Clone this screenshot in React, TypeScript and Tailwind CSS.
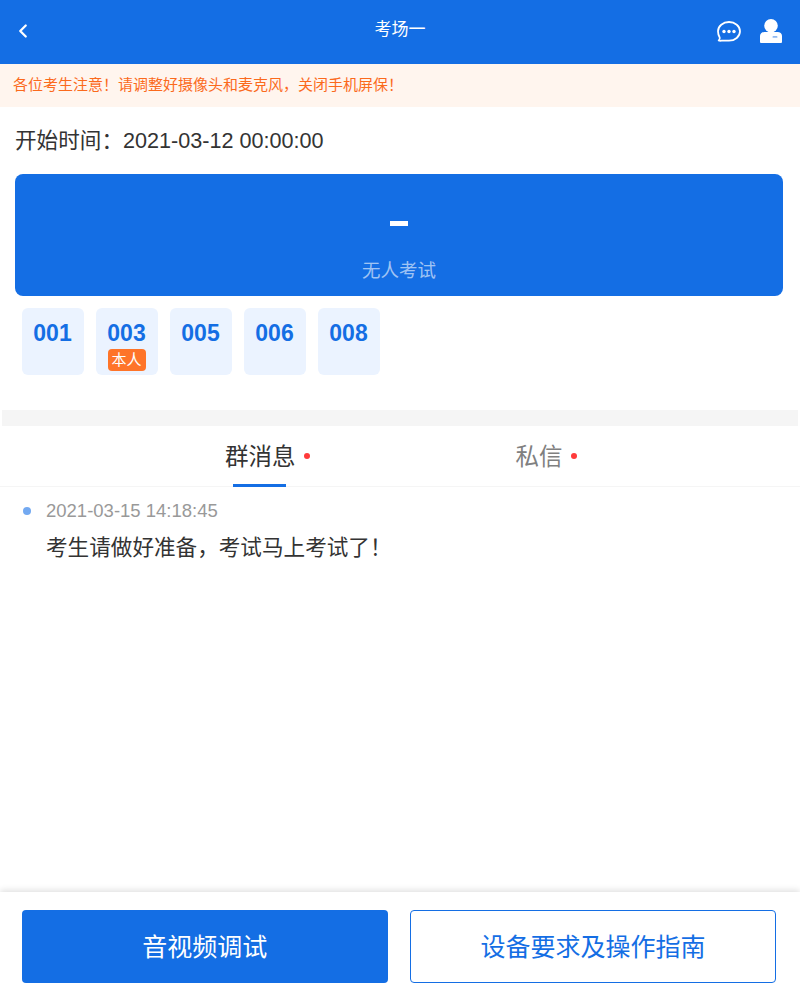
import React from 'react';
import { ChevronLeft } from 'lucide-react';

const seats = ['001', '003', '005', '006', '008'];
const cjk = "font-['Liberation_Sans','Noto_Sans_CJK_SC',sans-serif]";

const ChatIcon = () => (
  <svg width="24" height="21" viewBox="0 0 24 21" fill="none">
    <path
      d="M12 1c6 0 11 4.100 11 9.300s-5 9.400-11 9.400c-2.700 0-5.200-.2-7.300 0-1.100.1-2.300.2-3-.2 1-.9 1.300-2 1-3.100C1.700 14.800 1 12.700 1 10.300 1 5.100 6 1 12 1z"
      stroke="#fff"
      strokeWidth="1.800"
      strokeLinejoin="round"
    />
    <circle cx="7" cy="10.500" r="1.700" fill="#fff" />
    <circle cx="12" cy="10.500" r="1.700" fill="#fff" />
    <circle cx="17" cy="10.500" r="1.700" fill="#fff" />
  </svg>
);

const UserIcon = () => (
  <svg width="22" height="24" viewBox="0 0 22 24" fill="none">
    <circle cx="11" cy="6.800" r="6.800" fill="#fff" />
    <path d="M0 23v-6c0-2.500 2-4 4.500-4h13c2.500 0 4.500 1.500 4.500 4v6a1 1 0 0 1-1 1H1a1 1 0 0 1-1-1z" fill="#fff" />
    <rect x="12.500" y="17" width="5" height="1.800" rx=".9" fill="#8fb8f0" />
  </svg>
);

const App: React.FC = () => {
  return (
    <div className={`h-[996px] w-[800px] bg-white flex flex-col overflow-hidden ${cjk}`}>
      <div className="h-16 bg-[#146ee4] flex items-center pl-[12px] pr-[18px] pb-[2px] shrink-0">
        <div className="flex-1">
          <ChevronLeft className="w-[22px] h-[22px] text-white" strokeWidth={2.500} />
        </div>
        <h2 className="text-[17px] text-white pb-[2px] ml-[6px]">考场一</h2>
        <div className="flex-1 flex items-center justify-end gap-[19px]">
          <ChatIcon />
          <UserIcon />
        </div>
      </div>

      <div className="h-[43px] bg-[#fff5ee] flex items-center px-[13px] text-[15px] text-[#fb6a1c] shrink-0">
        {'各位考生注意\uFF01请调整好摄像头和麦克风\uFF0C关闭手机屏保\uFF01'}
      </div>

      <div className="px-[15px] pt-[19px] text-[21.600px] leading-[30px] text-[#333333]">{'开始时间\uFF1A2021-03-12 00:00:00'}</div>

      <div className="ml-[15px] mt-[18px] w-[768px] h-[122px] rounded-lg bg-[#146ee4] flex flex-col items-center shrink-0">
        <div className="mt-[47px] w-[18px] h-[5px] bg-white" />
        <div className="mt-[33px] text-[18.500px] leading-6 text-white/60">无人考试</div>
      </div>

      <div className="flex gap-3 pl-[21.500px] mt-3">
        {seats.map((seat) => (
          <div key={seat} className="w-[62px] h-[67px] rounded-md bg-[#ebf3ff] flex flex-col items-center pt-[10px]">
            <div className="text-[23px] leading-[30px] font-bold text-[#146ee4]">{seat}</div>
            {seat === '003' && (
              <div className="mt-px w-[38px] h-[22px] rounded bg-[#fe7429] text-white text-[15px] leading-[22px] text-center">本人</div>
            )}
          </div>
        ))}
      </div>

      <div className="mx-[2px] mt-[35px] h-4 bg-[#f5f5f5] shrink-0" />

      <div className="h-[61px] border-b border-[#f5f5f5] flex shrink-0">
        <div className="relative ml-[225px] flex items-center h-full">
          <span className="text-[23.500px] text-[#333333] pt-1">群消息</span>
          <span className="ml-[8px] w-[6px] h-[6px] rounded-full bg-[#ff3b3b]" />
          <div className="absolute left-2 bottom-[-1px] w-[53px] h-[3px] bg-[#146ee4]" />
        </div>
        <div className="ml-[206px] flex items-center h-full">
          <span className="text-[23.500px] text-[#808080] pt-1">私信</span>
          <span className="ml-[8px] w-[6px] h-[6px] rounded-full bg-[#ff3b3b]" />
        </div>
      </div>

      <div className="pl-[23px] pt-[12px]">
        <div className="flex items-center gap-[15px]">
          <span className="w-2 h-2 rounded-full bg-[#73a9f1]" />
          <span className="text-[18.500px] leading-6 text-[#999999]">2021-03-15 14:18:45</span>
        </div>
        <div className="ml-[23px] mt-[11px] text-[21.600px] leading-[28px] text-[#333333]">{'考生请做好准备\uFF0C考试马上考试了\uFF01'}</div>
      </div>

      <div className="mt-auto h-[104px] shrink-0 bg-white shadow-[0_-2px_6px_rgba(0,0,0,0.12)] flex gap-[22px] pl-[21.500px] pt-[18px]">
        <button className="w-[366.500px] h-[73px] rounded bg-[#146ee4] text-white text-[25px] pt-[3px]">音视频调试</button>
        <button className="w-[366px] h-[73px] rounded border border-[#146ee4] bg-white text-[#146ee4] text-[25px] pt-[3px]">设备要求及操作指南</button>
      </div>
    </div>
  );
};

export default App;
